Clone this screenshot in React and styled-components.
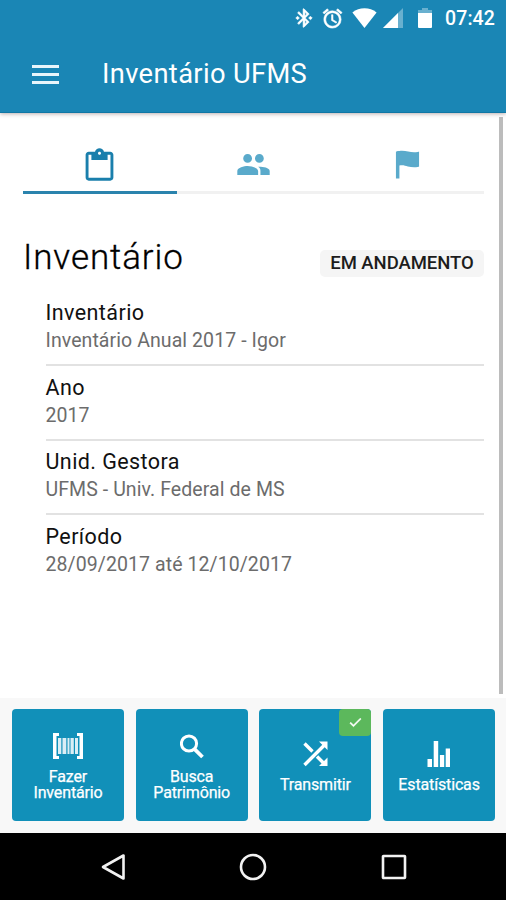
// src/App.jsx
import React, { useState } from 'react';
import styled, { createGlobalStyle } from 'styled-components';
import {
  IoMdCheckmark,
  IoMdClipboard,
  IoMdFlag,
  IoMdPeople,
} from 'react-icons/io';
import { MdAlarm, MdBluetoothConnected } from 'react-icons/md';

const GlobalStyle = createGlobalStyle`
  * {
    box-sizing: border-box;
  }

  body {
    margin: 0;
    background: #fff;
    font-family: Roboto, sans-serif;
  }

  button {
    font-family: inherit;
    border: none;
    padding: 0;
    cursor: pointer;
  }

  svg {
    display: block;
    flex: none;
  }
`;

const Screen = styled.div`
  width: 506px;
  height: 900px;
  display: flex;
  flex-direction: column;
  overflow: hidden;
  background: #fff;
`;

const Header = styled.header`
  height: 113px;
  flex: none;
  background: #1a86b5;
  color: #fff;
  border-bottom: 1px solid #1077a5;
  box-shadow: 0 1px 4px rgba(60, 30, 30, 0.35);
  z-index: 1;
`;

const StatusBar = styled.div`
  height: 36px;
  padding-right: 11px;
  display: flex;
  align-items: center;
  justify-content: flex-end;
`;

const StatusIcon = styled.span`
  margin-right: ${({ $gap }) => $gap}px;

  svg {
    stroke: none;
  }

  path:not([fill='none']) {
    stroke: ${({ $bold }) => ($bold ? 'currentColor' : 'none')};
    stroke-width: 0.6px;
  }
`;

const Clock = styled.span`
  padding-top: 1px;
  font-size: 19.5px;
  font-weight: 500;
  line-height: 36px;
  letter-spacing: 0.1px;
`;

const Toolbar = styled.div`
  height: 76px;
  padding-left: 32px;
  display: flex;
  align-items: center;
`;

const MenuButton = styled.button`
  background: none;
  width: 27px;
  margin-right: 43px;
`;

const Title = styled.h1`
  margin: 0;
  font-size: 27.3px;
  font-weight: 400;
  line-height: 32px;
  letter-spacing: 0.35px;
`;

const Content = styled.main`
  height: 585px;
  flex: none;
  display: flex;
  justify-content: space-between;
  padding: 4px 3px 4px 23px;
`;

const Page = styled.div`
  width: 461px;
`;

const ScrollThumb = styled.div`
  width: 4px;
  background: #bcbcbc;
`;

const Tabs = styled.nav`
  display: grid;
  grid-template-columns: repeat(3, 1fr);
  height: 77px;
`;

const Tab = styled.button`
  display: flex;
  align-items: center;
  justify-content: center;
  padding-top: 20px;
  background: none;
  color: ${({ $active }) => ($active ? '#1a7fac' : '#5aaacb')};
  border-bottom: 3px solid ${({ $active }) => ($active ? '#2a83ad' : '#f1f1f1')};
`;

const HeadingRow = styled.div`
  margin-top: 42px;
  height: 44px;
  display: flex;
  justify-content: space-between;
  align-items: center;
`;

const Heading = styled.h2`
  margin: 0;
  font-size: 35px;
  font-weight: 300;
  line-height: 44px;
  letter-spacing: 0.9px;
  color: #000;
  -webkit-text-stroke: 0.3px #000;
`;

const Status = styled.span`
  width: 164px;
  height: 27px;
  margin-top: 11px;
  border-radius: 5px;
  background: #f5f5f5;
  color: #1c1c1c;
  text-align: center;
  font-size: 18.5px;
  font-weight: 500;
  line-height: 27px;
  letter-spacing: -0.05px;
`;

const List = styled.dl`
  margin: 11.5px 0 0 22.5px;
`;

const Item = styled.div`
  height: 74.5px;
  padding-top: 7.5px;
  border-bottom: ${({ $last }) => ($last ? 'none' : '2px solid #e2e2e2')};
`;

const Label = styled.dt`
  font-size: 21.5px;
  line-height: 27px;
  letter-spacing: 0.42px;
  color: #111;
`;

const Value = styled.dd`
  margin: 0;
  font-size: 19.5px;
  line-height: 29px;
  letter-spacing: 0.08px;
  color: #6c6c6c;
`;

const Actions = styled.footer`
  height: 135px;
  flex: none;
  display: grid;
  grid-template-columns: repeat(4, 112px);
  column-gap: 11.7px;
  padding: 11.4px 11px 0 12px;
  background: #f8f8f8;
`;

const Action = styled.button`
  position: relative;
  height: 112px;
  display: flex;
  flex-direction: column;
  align-items: center;
  justify-content: center;
  padding-top: 2px;
  border-radius: 4px;
  background: #1190b9;
  color: #fff;
`;

const ActionIcon = styled.span`
  height: 37px;
  padding-bottom: 9px;
  display: flex;
  align-items: center;
`;

const ActionLabel = styled.span`
  font-size: 16px;
  line-height: 15.5px;
  letter-spacing: -0.15px;
  white-space: pre-line;
  -webkit-text-stroke: 0.25px #fff;
`;

const DoneBadge = styled.span`
  position: absolute;
  top: 0;
  right: 0;
  width: 32px;
  height: 27px;
  display: flex;
  align-items: center;
  justify-content: center;
  border-radius: 4px;
  background: #5cb85c;

  svg {
    stroke: #fff;
    stroke-width: 18px;
  }
`;

const NavBar = styled.div`
  flex: 1;
  display: flex;
  align-items: center;
  justify-content: space-between;
  padding: 0 99px 0 100px;
  background: #000;
`;

const WifiIcon = () => (
  <svg width="25" height="20" viewBox="0 0 25 20" fill="currentColor">
    <path d="M12.5 20 .4 4.4C4 1.6 8 .3 12.5.3s8.500 1.300 12.100 4.100z" />
  </svg>
);

const SignalIcon = () => (
  <svg width="20" height="20" viewBox="0 0 20 20" fill="currentColor">
    <path d="M20 0v20H0z" opacity="0.35" />
    <path d="M15 5v15H0z" />
  </svg>
);

const BatteryIcon = () => (
  <svg width="14" height="20" viewBox="0 0 14 20" fill="currentColor">
    <path d="M4 0h6v2h4v4H0V2h4z" opacity="0.35" />
    <path d="M0 5h14v14a1 1 0 0 1-1 1H1a1 1 0 0 1-1-1z" />
  </svg>
);

const MenuIcon = () => (
  <svg width="27" height="19" viewBox="0 0 27 19" fill="#e8f5fb">
    <path d="M0 0h27v3H0zM0 8h27v3H0zM0 16h27v3H0z" />
  </svg>
);

const BarcodeIcon = () => (
  <svg width="30" height="26" viewBox="0 0 30 26" fill="currentColor">
    <path d="M0 0h6v3H3.500v20H6v3H0zM30 0h-6v3h2.500v20H24v3h6z" />
    <path d="M5 5h3.300v16H5zM9.500 5h3.800v16H9.500zM14.500 5h2v16h-2zM17.500 5h3.300v16h-3.300zM22 5h3v16h-3z" opacity="0.85" />
  </svg>
);

const SearchIcon = () => (
  <svg width="24" height="25" viewBox="0 0 24 25" fill="none" stroke="currentColor">
    <circle cx="9" cy="9.500" r="7.600" strokeWidth="3" />
    <path d="m14.300 14.800 8.200 8.200" strokeWidth="3.800" />
  </svg>
);

const ShuffleIcon = () => (
  <svg width="25" height="26" viewBox="0 0 25 26" fill="none" stroke="currentColor" strokeWidth="3.400">
    <path d="m1.500 2.500 8 8M1.500 24 21 4.500M14 15.500l7 7" />
    <path d="M16 .5h8.500V9zM24.500 16.500V25H16z" fill="currentColor" stroke="none" />
  </svg>
);

const StatsIcon = () => (
  <svg width="24" height="26" viewBox="0 0 24 26" fill="currentColor">
    <path d="M.5 18H5v8H.5zM6.700 0h4.500v26H6.700zM12.900 14h4.300v12h-4.300zM18.700 7.500H23V26h-4.300z" />
  </svg>
);

const BackIcon = () => (
  <svg width="25" height="28" viewBox="0 0 25 28" fill="none" stroke="#f2f2f2" strokeWidth="2.600">
    <path d="M23.500 2.500v23L3 14z" strokeLinejoin="round" />
  </svg>
);

const HomeIcon = () => (
  <svg width="28" height="28" viewBox="0 0 28 28" fill="none" stroke="#f2f2f2" strokeWidth="2.600">
    <circle cx="14" cy="14" r="12" />
  </svg>
);

const RecentsIcon = () => (
  <svg width="26" height="26" viewBox="0 0 26 26" fill="none" stroke="#f2f2f2" strokeWidth="2.600">
    <rect x="2" y="2" width="22" height="22" rx="0.500" />
  </svg>
);

const tabs = [
  { id: 'inventario', icon: <IoMdClipboard size={37} /> },
  { id: 'equipe', icon: <IoMdPeople size={37} /> },
  { id: 'sinalizados', icon: <IoMdFlag size={37} /> },
];

const items = [
  { label: 'Inventário', value: 'Inventário Anual 2017 - Igor' },
  { label: 'Ano', value: '2017' },
  { label: 'Unid. Gestora', value: 'UFMS - Univ. Federal de MS' },
  { label: 'Período', value: '28/09/2017 até 12/10/2017' },
];

const actions = [
  { label: 'Fazer\nInventário', icon: <BarcodeIcon /> },
  { label: 'Busca\nPatrimônio', icon: <SearchIcon /> },
  { label: 'Transmitir', icon: <ShuffleIcon />, done: true },
  { label: 'Estatísticas', icon: <StatsIcon /> },
];

const App = () => {
  const [activeTab, setActiveTab] = useState('inventario');

  return (
    <>
      <GlobalStyle />
      <Screen>
        <Header>
          <StatusBar>
            <StatusIcon $gap={6} $bold><MdBluetoothConnected size={22} /></StatusIcon>
            <StatusIcon $gap={8} $bold><MdAlarm size={23} /></StatusIcon>
            <StatusIcon $gap={6}><WifiIcon /></StatusIcon>
            <StatusIcon $gap={15}><SignalIcon /></StatusIcon>
            <StatusIcon $gap={13}><BatteryIcon /></StatusIcon>
            <Clock>07:42</Clock>
          </StatusBar>
          <Toolbar>
            <MenuButton><MenuIcon /></MenuButton>
            <Title>Inventário UFMS</Title>
          </Toolbar>
        </Header>

        <Content>
          <Page>
            <Tabs>
              {tabs.map(({ id, icon }) => (
                <Tab key={id} $active={id === activeTab} onClick={() => setActiveTab(id)}>
                  {icon}
                </Tab>
              ))}
            </Tabs>
            <HeadingRow>
              <Heading>Inventário</Heading>
              <Status>EM ANDAMENTO</Status>
            </HeadingRow>
            <List>
              {items.map(({ label, value }, i) => (
                <Item key={label} $last={i === items.length - 1}>
                  <Label>{label}</Label>
                  <Value>{value}</Value>
                </Item>
              ))}
            </List>
          </Page>
          <ScrollThumb />
        </Content>

        <Actions>
          {actions.map(({ label, icon, done }) => (
            <Action key={label}>
              {done && <DoneBadge><IoMdCheckmark size={15} /></DoneBadge>}
              <ActionIcon>{icon}</ActionIcon>
              <ActionLabel>{label}</ActionLabel>
            </Action>
          ))}
        </Actions>

        <NavBar>
          <BackIcon />
          <HomeIcon />
          <RecentsIcon />
        </NavBar>
      </Screen>
    </>
  );
};

export default App;
